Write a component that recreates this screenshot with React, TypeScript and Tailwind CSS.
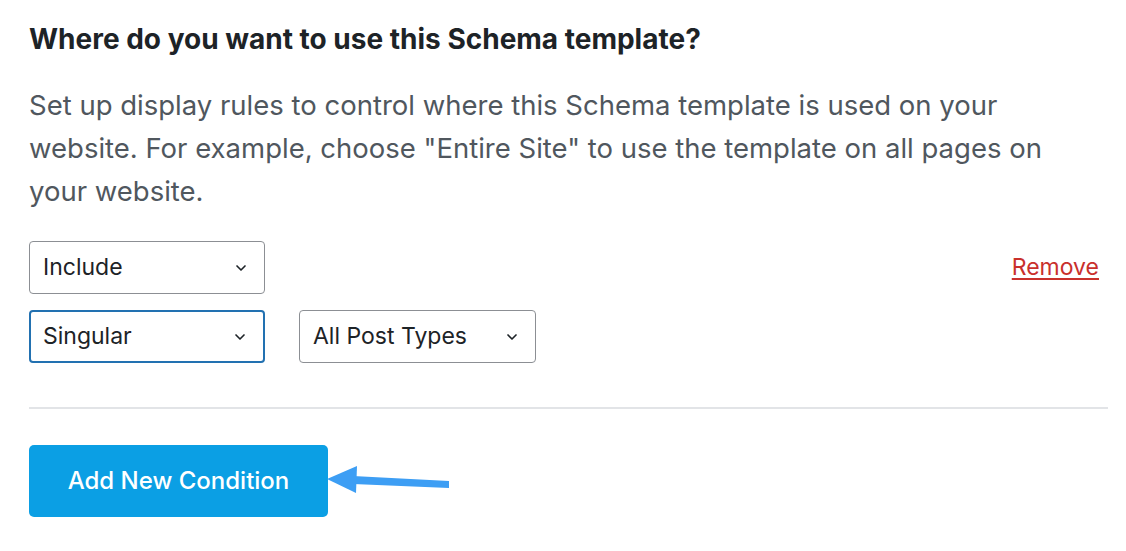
import { ChevronDown } from "lucide-react";

const Select = ({ label, width, focused }: { label: string; width: string; focused?: boolean }) => (
  <div
    className={`${width} h-[53px] flex items-center justify-between pr-[15px] bg-white rounded-[4px] ${
      focused ? "border-2 border-[#2271b1] pl-[12px]" : "border border-[#8c8f94] pl-[13px]"
    }`}
  >
    <span className="text-[23px] text-[#1d2327]">{label}</span>
    <ChevronDown className="w-[16px] h-[16px] text-[#1d2327]" strokeWidth={2.5} />
  </div>
);

export default function App() {
  return (
    <div
      className="min-h-screen bg-white pl-[29px] pr-[18px] pt-[23px]"
      style={{ fontFamily: "Inter, sans-serif" }}
    >
      <h2 className="text-[28px] leading-[32px] font-bold text-[#1d2327]">
        Where do you want to use this Schema template?
      </h2>
      <p className="mt-[29px] text-[27.5px] leading-[43px] text-[#50575e] max-w-[1050px]">
        Set up display rules to control where this Schema template is used on your website. For example, choose
        "Entire Site" to use the template on all pages on your website.
      </p>

      <div className="mt-[28px] flex flex-col gap-[16px]">
        <div className="flex items-center justify-between">
          <Select label="Include" width="w-[236px]" />
          <a href="#" className="mr-[9px] text-[23px] text-[#c9302c] underline underline-offset-[3px]">
            Remove
          </a>
        </div>
        <div className="flex items-center gap-[34px]">
          <Select label="Singular" width="w-[236px]" focused />
          <Select label="All Post Types" width="w-[237px]" />
        </div>
      </div>

      <div className="mt-[44px] h-[2px] bg-[#e2e4e7]" />

      <div className="mt-[36px] flex items-center">
        <button className="w-[299px] h-[72px] rounded-[5px] bg-[#0b9fe4] text-white text-[24px] font-medium">
          Add New Condition
        </button>
        <svg width="125" height="34" viewBox="0 0 125 34" className="-ml-[1px]">
          <polygon points="0,15 30,2 29,29" fill="#3d9ef4" />
          <polygon points="26,12 122,17 122,24 26,20" fill="#3d9ef4" />
        </svg>
      </div>
    </div>
  );
}
